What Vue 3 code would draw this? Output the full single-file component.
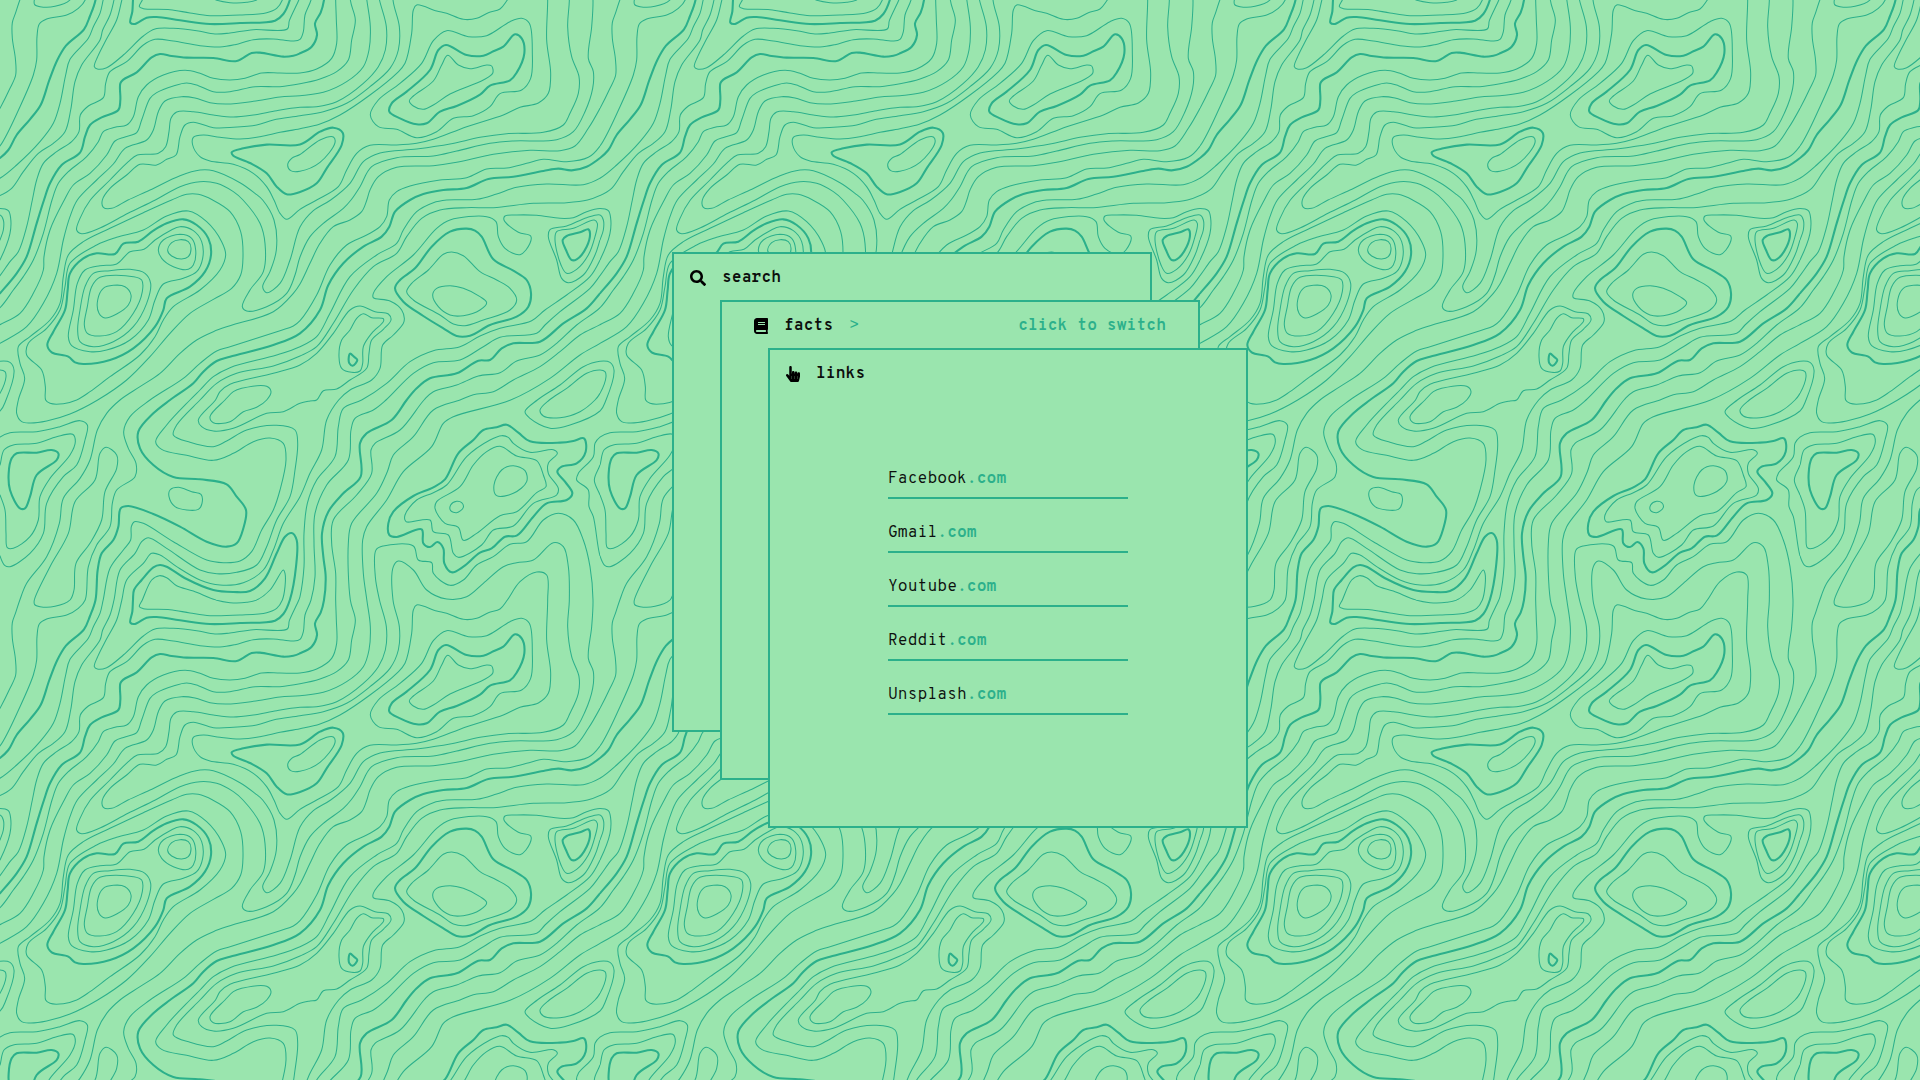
<script setup>
const TILE = 1800

// Contour lines of one repeating tile, grouped by sector. "*" = index contour, "o" = closed ring.
const sectors = [
  { x: 0, y: 0, lines: `
59 0 47 38 37 68 37 115 46 175 47 225 30 265 0 325
103 0 104 14 120 20 165 19 210 0
254 0 235 25 200 45 140 57 118 72 111 110 110 180 100 225 60 320 0 438
* 286 0 270 48 252 88 198 137 172 180 148 240 122 315 90 358 50 405 25 450 0 474
309 0 300 40 280 80 265 115 210 178 197 225 180 310 160 370 120 425 50 495 0 535
341 0 330 45 308 90 300 120 245 195 225 245 212 330 195 395 160 430 115 460 70 515 35 565 0 587
366 0 350 60 318 120 293 170 283 200 292 207 320 203 370 165 430 108 465 87 520 85 590 92 645 102 690 99 760 89 862 87 868 62 896 0
97 600 110 540 130 490 170 455 215 425 237 395 241 345 265 318 310 293 317 250 330 215 380 185 430 135 465 118 520 123 600 137 660 141 705 134 760 119 820 117 880 123 900 118
* 132 600 150 550 185 495 240 458 255 410 270 375 305 352 355 330 361 300 361 250 370 239 410 217 455 172 480 162 515 168 560 173 640 174 710 183 755 159 780 158 850 170 880 167 900 160
156 600 175 550 205 515 260 470 295 425 310 395 345 382 380 375 400 350 415 290 440 255 490 225 555 211 600 220 640 235 690 240 735 235 785 219 840 219 900 219
193 600 220 555 270 520 320 465 345 423 375 411 410 398 425 360 450 295 470 278 520 258 560 249 595 257 640 275 690 275 765 260 840 260 900 252
232 600 290 540 340 492 375 445 440 420 460 390 475 335 495 303 545 290 585 294 630 308 680 312 760 304 840 291 900 287
271 600 330 540 385 485 412 465 475 460 497 440 507 395 513 355 530 336 580 335 640 345 700 351 760 345 830 332 900 322
307 600 330 565 380 525 420 493 470 495 500 478 528 465 540 410 555 375 580 367 640 383 700 382 770 375 820 360 900 348
822 600 800 560 760 520 700 493 630 483 600 470 578 435 580 412 610 405 660 412 720 417 780 410 840 397 900 386
* 900 434 800 434 730 445 695 457 700 467 750 489 800 520 830 560 860 583 900 576
900 464 875 475 863 495 872 512 900 514
384 600 450 570 540 527 600 510 640 512 720 548 765 580 788 600
466 600 540 560 600 545 650 550 700 575 730 600
515 600 560 583 595 583 638 600
* 399 0 397 35 391 68 405 72 440 53 470 51 540 61 630 72 720 69 825 62 850 42 869 0
427 0 418 20 430 26 510 29 570 39 630 47 720 45 800 38 830 25 846 0
645 0 690 8 740 7 770 0` },
  { x: 900, y: 0, lines: `
33 0 15 45 10 95 0 118
* 72 0 62 38 45 70 51 105 35 140 0 160
107 0 109 60 110 130 95 175 50 207 0 219
151 0 166 60 155 120 145 180 110 215 60 237 0 251
201 0 211 80 207 150 190 200 140 245 70 277 0 287
239 0 259 80 256 150 235 200 190 250 110 305 50 320 0 322
280 0 298 80 295 150 270 205 210 260 140 310 70 335 0 347
622 0 600 27 565 38 530 55 490 58 440 40 410 33 350 15 340 30 335 100 315 190 290 220 210 285 120 345 60 372 0 386
o 440 92 400 122 365 190 300 250 235 300 211 345 235 380 290 388 350 413 410 395 460 355 520 347 570 320 600 281 665 270 692 235 697 160 688 70 665 55 630 65 560 107 505 110
*o 438 135 415 150 390 210 320 275 275 310 268 335 300 355 350 373 380 370 420 335 470 318 540 284 570 257 630 241 650 218 673 160 665 115 645 103 610 140 580 154 550 167 500 165
o 443 166 425 195 400 243 340 288 328 303 340 318 370 328 400 315 450 282 550 240 578 220 575 198 560 195 510 206 475 195
743 0 740 120 752 220 745 280 715 309 660 322 610 345 500 380 400 418 350 430 290 435 210 436 170 460 140 510 115 560 50 600
808 0 803 80 815 170 837 230 835 280 810 340 790 375 730 397 620 401 540 412 450 432 350 447 240 459 190 485 150 550 92 600
880 0 875 80 865 175 880 215 878 265 855 335 820 395 770 419 640 423 570 430 470 453 400 468 290 473 215 500 180 560 153 600
900 325 865 385 825 438 780 452 690 451 580 463 470 487 400 497 290 502 235 530 210 570 201 600
900 438 865 472 800 485 730 478 680 490 620 504 560 507 500 533 420 540 330 558 290 575 268 600
* 900 474 860 500 815 511 775 506 730 513 640 530 565 537 500 564 430 570 370 582 330 600
900 534 850 554 740 552 650 562 590 582 530 598 440 600
900 586 855 600
* 0 433 60 395 100 383 128 398 125 435 80 505 50 550 0 576
0 463 60 420 100 411 105 428 60 487 0 513` },
  { x: 0, y: 600, lines: `
97 0 80 80 55 155 30 185 0 227
* 132 0 110 70 80 170 50 220 0 280
156 0 130 100 100 180 70 230 40 270 0 323
193 0 150 90 132 170 130 210 100 280 60 340 0 374
232 0 210 50 190 120 170 220 130 310 80 380 0 430
271 0 240 55 230 90 245 101 300 84 384 40 466 0
307 0 310 22 335 25 384 0
515 0 430 38 330 85 250 125 205 165 190 230 180 310 150 360 90 410 55 440 60 490 74 535 55 600
230 600 270 575 330 530 420 465 465 410 490 360 520 320 600 270 660 210 677 165 665 125 620 65 565 33 500 48 430 90 350 112 290 135 210 190 195 260 180 330 140 385 85 430 80 465 125 510 136 560 137 600
638 0 690 35 722 95 729 170 722 225 695 265 640 298 570 340 510 400 450 470 380 540 293 600
728 0 780 70 795 130 790 215 750 270 727 320 740 333 800 320 860 280 885 225 900 170
788 0 822 60 829 150 810 215 788 260 800 278 840 250 870 180 900 82
822 0 840 40 860 58 900 28
900 252 880 280 820 335 690 377 640 395 590 420 540 460 480 520 420 560 360 600
900 362 880 378 840 392 690 440 650 453 600 490 550 535 450 600
* 900 400 820 435 690 470 650 483 610 515 580 550 510 600
900 440 830 465 690 503 640 530 600 570 570 600
900 468 820 498 710 520 650 550 600 600
900 496 820 520 690 553 660 575 648 600
675 600 700 575 725 565 800 559 813 575 800 600
*o 550 58 590 75 625 115 633 165 615 215 570 260 500 295 490 330 465 380 400 445 330 480 250 492 225 487 205 470 155 457 142 435 160 395 195 330 203 270 210 220 250 175 290 160 345 162 370 131 415 125 460 92 500 70
o 540 80 580 92 605 125 608 175 590 215 550 235 490 252 465 300 445 360 390 420 320 450 270 455 215 437 205 410 220 330 232 250 255 210 300 197 350 192 390 155 432 148 465 120 510 92
o 540 103 575 115 587 150 580 195 565 208 520 200 485 175 475 150 490 120
o 540 119 565 125 573 145 565 170 545 177 515 168 503 152 515 128
o 390 208 435 220 452 250 440 310 400 380 340 425 280 440 240 425 233 390 240 330 255 260 280 220 330 212
o 300 232 400 230 425 240 427 275 400 340 350 395 300 408 262 400 253 375 262 320 275 260
o 340 256 375 260 393 285 385 315 350 342 315 354 297 340 293 300 310 265
0 26 25 32 32 55 30 100 0 180
0 45 10 60 10 90 0 120
0 483 30 487 42 510 18 600
0 510 15 515 18 530 0 580` },
  { x: 900, y: 600, lines: `
0 28 50 0
0 80 40 32 92 0
0 172 30 110 70 70 130 25 153 0
200 0 185 35 150 60 100 80 60 130 30 190 0 252
268 0 260 50 240 80 200 105 140 135 90 195 50 285 0 362
* 330 0 285 35 268 80 245 110 190 140 130 190 85 255 60 330 0 400
440 0 400 8 350 35 310 90 290 130 230 165 150 230 90 340 50 410 0 440
870 0 800 8 700 10 580 23 500 23 420 30 365 55 320 110 290 160 220 200 160 270 100 370 50 440 0 468
0 494 50 460 100 400 150 330 180 318 225 335 265 342 273 360 250 388 215 420 207 460 200 505 150 540 110 567 70 572 50 600
o 190 341 170 355 150 390 125 420 117 470 125 505 155 517 180 513 188 490 190 440 215 400 250 365 250 356 215 353
*o 150 461 146 475 148 490 158 497 172 480 162 470
116 600 150 570 215 540 240 505 248 435 280 405 312 365 305 330 270 303 220 293 220 280 260 230 340 165 410 85 450 60 560 50 588 65 595 110 615 145 660 164 690 130 692 108 655 97 612 60 615 48 650 45 710 46 780 55 820 53 860 35 900 25
*o 500 86 450 95 395 140 345 205 300 240 285 265 310 305 370 348 430 385 470 408 510 407 570 375 650 350 685 320 693 280 680 240 640 212 580 178 545 110 525 92
o 455 156 430 163 385 210 335 250 320 275 340 300 420 345 460 372 495 377 550 360 630 330 650 300 630 265 590 240 540 215 490 167
o 450 257 410 265 398 285 415 320 450 345 490 347 540 330 560 308 540 290 490 265
900 45 860 53 800 78 750 89 745 110 770 180 785 235 805 248 850 225 885 165 900 120
o 883 60 820 85 770 95 765 120 783 195 800 220 830 208 865 165 885 110 892 70
*o 865 88 840 97 800 108 788 120 798 150 815 180 830 178 860 140 870 100
900 180 870 230 800 285 735 330 695 362 600 385 540 408 480 440 400 452 330 485 260 550 185 600
900 227 870 265 780 335 735 375 710 400 600 412 550 440 480 480 400 488 340 520 258 600
* 900 280 860 325 790 370 720 425 640 430 605 445 570 480 535 482 470 520 390 535 350 565 320 600
900 323 830 375 770 430 720 465 650 483 600 518 535 528 470 555 400 575 372 600
900 374 840 405 780 455 720 500 640 540 580 575 520 584 480 600
900 430 840 465 750 535 632 600
900 484 850 500 780 555 712 600
900 510 860 520 800 565 748 600
900 580 885 600` },
  { x: 0, y: 1200, lines: `
18 0 0 32
55 0 50 40 65 65 90 69 140 63 210 42 293 0
137 0 150 10 190 11 230 0
360 0 320 40 292 90 270 180 240 235 190 295 178 370 140 470 80 550 60 600
450 0 390 50 371 95 385 145 408 190 405 230 350 270 337 310 330 380 290 435 265 500 257 600
* 510 0 460 40 415 95 420 145 460 195 520 231 600 238 680 253 710 290 738 330 730 385 710 430 680 440 620 425 540 380 460 342 385 318 362 325 355 380 340 420 305 460 293 510 287 600
570 0 500 75 467 125 485 148 560 166 640 181 700 160 760 125 810 114 850 130 858 180 840 270 820 330 785 390 755 455 720 483 670 488 620 480 520 425 430 370 403 365 394 380 392 420 370 450 330 505 310 600
600 0 530 75 520 105 570 127 640 140 680 123 740 90 830 76 885 90 893 130 885 210 870 290 830 360 800 440 770 495 710 517 650 521 600 510 500 445 445 413 425 425 405 460 360 510 343 600
645 0 595 60 605 80 640 93 700 85 800 40 850 35 900 10
675 0 630 50 640 68 690 65 730 35 770 22 800 0
o 535 262 510 270 507 290 525 320 560 330 595 328 606 310 603 283 575 275
900 290 850 370 820 450 790 510 730 548 660 555 600 540 530 500 480 465 455 460 430 490 380 540 365 600
* 399 600 402 570 425 540 460 502 480 495 500 500 560 537 640 570 700 576 750 573 795 535 830 460 855 410 875 399 890 420 888 500 870 600
427 600 455 540 478 527 500 533 530 557 580 573 650 600
770 600 810 570 850 510 855 520 855 560 848 600
0 110 30 98 110 95 180 80 240 62 262 75 255 120 230 195 190 230 140 310 130 400 90 460 30 500 15 497 0 465
0 195 12 150 40 135 110 130 170 110 218 103 226 125 210 165 150 235 120 290 115 360 90 410 40 445 22 443 18 400 15 330 0 285
*o 155 150 110 158 50 160 35 175 26 220 30 270 60 325 75 325 90 290 110 225 170 180 175 160
103 600 150 500 205 400 225 305 285 240 300 160 318 142 350 165 350 205 315 275 305 360 270 430 228 490 222 570 210 600
900 590 897 600` },
  { x: 900, y: 1200, lines: `
0 10 30 3 50 0
116 0 80 60 65 150 30 220 0 290
185 0 130 25 115 80 105 170 50 240 22 310 12 400 12 500 0 590
258 0 220 30 165 55 153 90 145 180 80 255 45 340 42 430 45 530 33 600
* 320 0 275 60 200 100 180 130 182 230 130 280 85 335 66 400 70 470 77 530 72 600
372 0 300 90 225 130 213 150 215 220 170 285 100 360 95 430 107 520 107 600
480 0 400 30 340 110 280 165 262 215 230 280 155 370 145 430 151 600
632 0 460 50 430 70 395 140 310 215 260 300 200 380 188 420 190 520 200 600
712 0 675 35 690 55 750 85 810 75 900 34
748 0 720 30 730 48 780 53 840 35 885 0
*o 620 74 590 82 550 90 520 120 475 160 435 238 400 262 340 288 280 335 265 370 268 405 290 411 365 388 370 430 390 441 412 426 430 445 433 490 455 517 490 500 540 458 575 445 615 410 650 407 700 350 740 310 800 300 817 280 795 245 772 215 785 200 830 190 857 155 852 115 820 123 780 128 690 124 655 98
o 605 107 570 120 500 170 440 255 400 278 350 300 315 345 318 365 390 360 400 395 445 405 460 460 475 472 545 435 580 390 640 378 700 310 770 285 775 265 745 220 745 190 772 160 760 149 690 157 640 130 625 112
o 600 139 560 155 520 195 480 260 410 305 405 325 435 370 475 382 490 421 530 400 600 347 650 335 710 278 738 260 730 225 710 182 650 168
o 640 197 605 210 582 255 590 287 640 280 680 245 675 212
o 470 304 452 315 452 332 470 338 490 322 485 308
238 600 226 530 228 450 250 438 340 438 355 480 395 488 400 520 450 556 490 540 530 495 580 470 630 433 680 425 730 360 775 340 820 360 850 420 870 500 878 600
278 600 280 500 295 483 340 510 380 570 440 597 500 590 550 550 610 500 650 488 700 480 760 428 790 440 805 500 808 600
622 600 660 545 710 516 740 525 743 600
900 113 885 130 880 170 835 220 830 240 865 270 867 320 880 350 900 470
900 195 883 240 900 285` },
]

const contours = sectors.flatMap((sector, group) =>
  sector.lines.trim().split('\n').map((line) => {
    const flags = line.match(/^[*o]*/)[0]
    const n = line.slice(flags.length).trim().split(' ').map(Number)
    const pts = []
    for (let i = 0; i < n.length; i += 2) pts.push([n[i] + sector.x, n[i + 1] + sector.y])
    return { group, bold: flags.includes('*'), closed: flags.includes('o'), pts }
  }),
)

const wrap = (d) => d - TILE * Math.round(d / TILE)

// Open lines continue in the next sector (or across the tile edge): share the joint and its tangent.
const ends = contours.filter((c) => !c.closed).flatMap((c) => [
  { c, p: c.pts[0], q: c.pts[1], side: 'before' },
  { c, p: c.pts.at(-1), q: c.pts.at(-2), side: 'after' },
])
const joints = ends.map((a) => {
  let best = null
  let bestDistance = 18
  for (const b of ends) {
    if (b === a || b.c.bold !== a.c.bold || b.c.group === a.c.group) continue
    const d = Math.hypot(wrap(b.p[0] - a.p[0]), wrap(b.p[1] - a.p[1]))
    if (d < bestDistance) { best = b; bestDistance = d }
  }
  if (!best) return null
  const dx = wrap(best.p[0] - a.p[0])
  const dy = wrap(best.p[1] - a.p[1])
  return {
    joint: [a.p[0] + dx / 2, a.p[1] + dy / 2],
    next: [a.p[0] + wrap(best.q[0] - a.p[0]), a.p[1] + wrap(best.q[1] - a.p[1])],
  }
})
ends.forEach((a, i) => {
  if (!joints[i]) return
  a.c[a.side] = joints[i].next
  a.c.pts[a.side === 'before' ? 0 : a.c.pts.length - 1] = joints[i].joint
})

// Centripetal Catmull-Rom spline as cubic segments.
function toPath({ pts, closed, before, after }) {
  const n = pts.length
  const at = (i) => {
    if (closed) return pts[(i + n) % n]
    if (i < 0) return before || pts[0]
    if (i >= n) return after || pts[n - 1]
    return pts[i]
  }
  const f = (v) => (v / 3).toFixed(2)
  let d = `M${f(pts[0][0])} ${f(pts[0][1])}`
  for (let i = 0; i < (closed ? n : n - 1); i++) {
    const [p0, p1, p2, p3] = [at(i - 1), at(i), at(i + 1), at(i + 2)]
    const gap = (a, b) => Math.sqrt(Math.hypot(a[0] - b[0], a[1] - b[1]))
    const [a, b, c] = [gap(p0, p1), gap(p1, p2), gap(p2, p3)]
    const c1 = [0, 1].map((k) => a < 0.5 ? p1[k] : (a * a * p2[k] - b * b * p0[k] + (2 * a * a + 3 * a * b + b * b) * p1[k]) / (3 * a * (a + b)))
    const c2 = [0, 1].map((k) => c < 0.5 ? p2[k] : (c * c * p1[k] - b * b * p3[k] + (2 * c * c + 3 * c * b + b * b) * p2[k]) / (3 * c * (c + b)))
    d += `C${f(c1[0])} ${f(c1[1])} ${f(c2[0])} ${f(c2[1])} ${f(p2[0])} ${f(p2[1])}`
  }
  return closed ? d + 'Z' : d
}

const thin = contours.filter((c) => !c.bold).map(toPath).join('')
const bold = contours.filter((c) => c.bold).map(toPath).join('')

const links = ['Facebook', 'Gmail', 'Youtube', 'Reddit', 'Unsplash']
</script>

<template>
  <main class="page">
    <svg class="topography" width="100%" height="100%" aria-hidden="true">
      <defs>
        <pattern id="contours" width="600" height="600" patternUnits="userSpaceOnUse">
          <path class="contour" :d="thin" />
          <path class="contour index" :d="bold" />
        </pattern>
      </defs>
      <rect width="100%" height="100%" fill="url(#contours)" />
    </svg>

    <div class="stack">
      <section class="card search">
        <header class="bar">
          <svg width="16" height="16" viewBox="0 0 512 512"><path d="M505 442.7L405.3 343c-4.5-4.5-10.6-7-17-7H372c27.6-35.3 44-79.7 44-128C416 93.1 322.9 0 208 0S0 93.1 0 208s93.1 208 208 208c48.3 0 92.7-16.4 128-44v16.3c0 6.4 2.5 12.5 7 17l99.7 99.7c9.4 9.4 24.6 9.4 33.9 0l28.3-28.3c9.4-9.4 9.4-24.6.1-34zM208 336c-70.7 0-128-57.2-128-128 0-70.7 57.2-128 128-128 70.7 0 128 57.2 128 128 0 70.7-57.2 128-128 128z" /></svg>
          <h2>search</h2>
        </header>
      </section>

      <section class="card facts">
        <header class="bar inset">
          <svg width="14" height="16" viewBox="0 0 448 512"><path d="M448 360V24c0-13.3-10.7-24-24-24H96C43 0 0 43 0 96v320c0 53 43 96 96 96h328c13.3 0 24-10.7 24-24v-16c0-7.5-3.5-14.3-8.9-18.7-4.2-15.4-4.2-59.3 0-74.7 5.4-4.3 8.9-11.1 8.9-18.6zM128 134c0-3.3 2.7-6 6-6h212c3.3 0 6 2.7 6 6v20c0 3.3-2.7 6-6 6H134c-3.3 0-6-2.7-6-6v-20zm0 64c0-3.3 2.7-6 6-6h212c3.3 0 6 2.7 6 6v20c0 3.3-2.7 6-6 6H134c-3.3 0-6-2.7-6-6v-20zm253.4 250H96c-17.7 0-32-14.3-32-32 0-17.6 14.4-32 32-32h285.4c-1.9 17.1-1.9 46.9 0 64z" /></svg>
          <h2>facts</h2>
          <span class="arrow">&gt;</span>
          <span class="hint">click to switch</span>
        </header>
      </section>

      <section class="card links">
        <header class="bar">
          <svg width="14" height="16" viewBox="0 0 448 512"><path d="M448 240v96c0 3.084-.356 6.159-1.063 9.162l-32 136C410.686 499.23 394.562 512 376 512H168a40.004 40.004 0 0 1-32.35-16.473l-127.997-176c-12.993-17.866-9.043-42.883 8.822-55.876 17.867-12.994 42.884-9.043 55.877 8.823L104 315.992V40c0-22.091 17.908-40 40-40s40 17.909 40 40v200h8v-40c0-22.091 17.908-40 40-40s40 17.909 40 40v40h8v-24c0-22.091 17.908-40 40-40s40 17.909 40 40v24h8c0-22.091 17.908-40 40-40s40 17.909 40 40zm-256 80h-8v96h8v-96zm88 0h-8v96h8v-96zm88 0h-8v96h8v-96z" /></svg>
          <h2>links</h2>
        </header>
        <nav class="list">
          <a v-for="name in links" :key="name" class="link">{{ name }}<b>.com</b></a>
        </nav>
      </section>
    </div>
  </main>
</template>

<style>
body {
  overflow: hidden;
}
</style>

<style scoped>
.page {
  --paper: #9ae5ae;
  --line: #2cb08b;
  position: relative;
  display: flex;
  align-items: center;
  justify-content: center;
  height: 100vh;
  background: var(--paper);
  color: #0c0f0d;
  font: 16px/20px "Overpass Mono", "DejaVu Sans Mono", monospace;
}

.topography {
  position: absolute;
  inset: 0;
}

.contour {
  fill: none;
  stroke: var(--line);
  stroke-width: 1.06;
  stroke-linecap: round;
  stroke-linejoin: round;
}

.contour.index {
  stroke-width: 2.1;
}

.stack {
  position: relative;
  width: 576px;
  height: 576px;
}

.card {
  position: absolute;
  box-sizing: border-box;
  display: flex;
  flex-direction: column;
  width: 480px;
  height: 480px;
  border: 2px solid var(--line);
  background: var(--paper);
}

.search {
  left: 0;
  top: 0;
}

.facts {
  left: 48px;
  top: 48px;
}

.links {
  left: 96px;
  top: 96px;
}

.bar {
  box-sizing: border-box;
  display: flex;
  align-items: center;
  gap: 16px;
  height: 46px;
  padding: 2px 16px 0;
}

.bar.inset {
  padding: 2px 32px 0;
}

.bar svg {
  fill: #000;
}

h2 {
  margin: 0;
  font: inherit;
  font-weight: 700;
}

.arrow,
.hint,
b {
  color: var(--line);
}

.hint {
  margin-left: auto;
  font-weight: 700;
}

.list {
  display: flex;
  flex-direction: column;
  gap: 16px;
  width: 240px;
  margin: 65px auto 0;
}

.link {
  box-sizing: border-box;
  height: 38px;
  padding-top: 8px;
  border-bottom: 2px solid var(--line);
}
</style>
